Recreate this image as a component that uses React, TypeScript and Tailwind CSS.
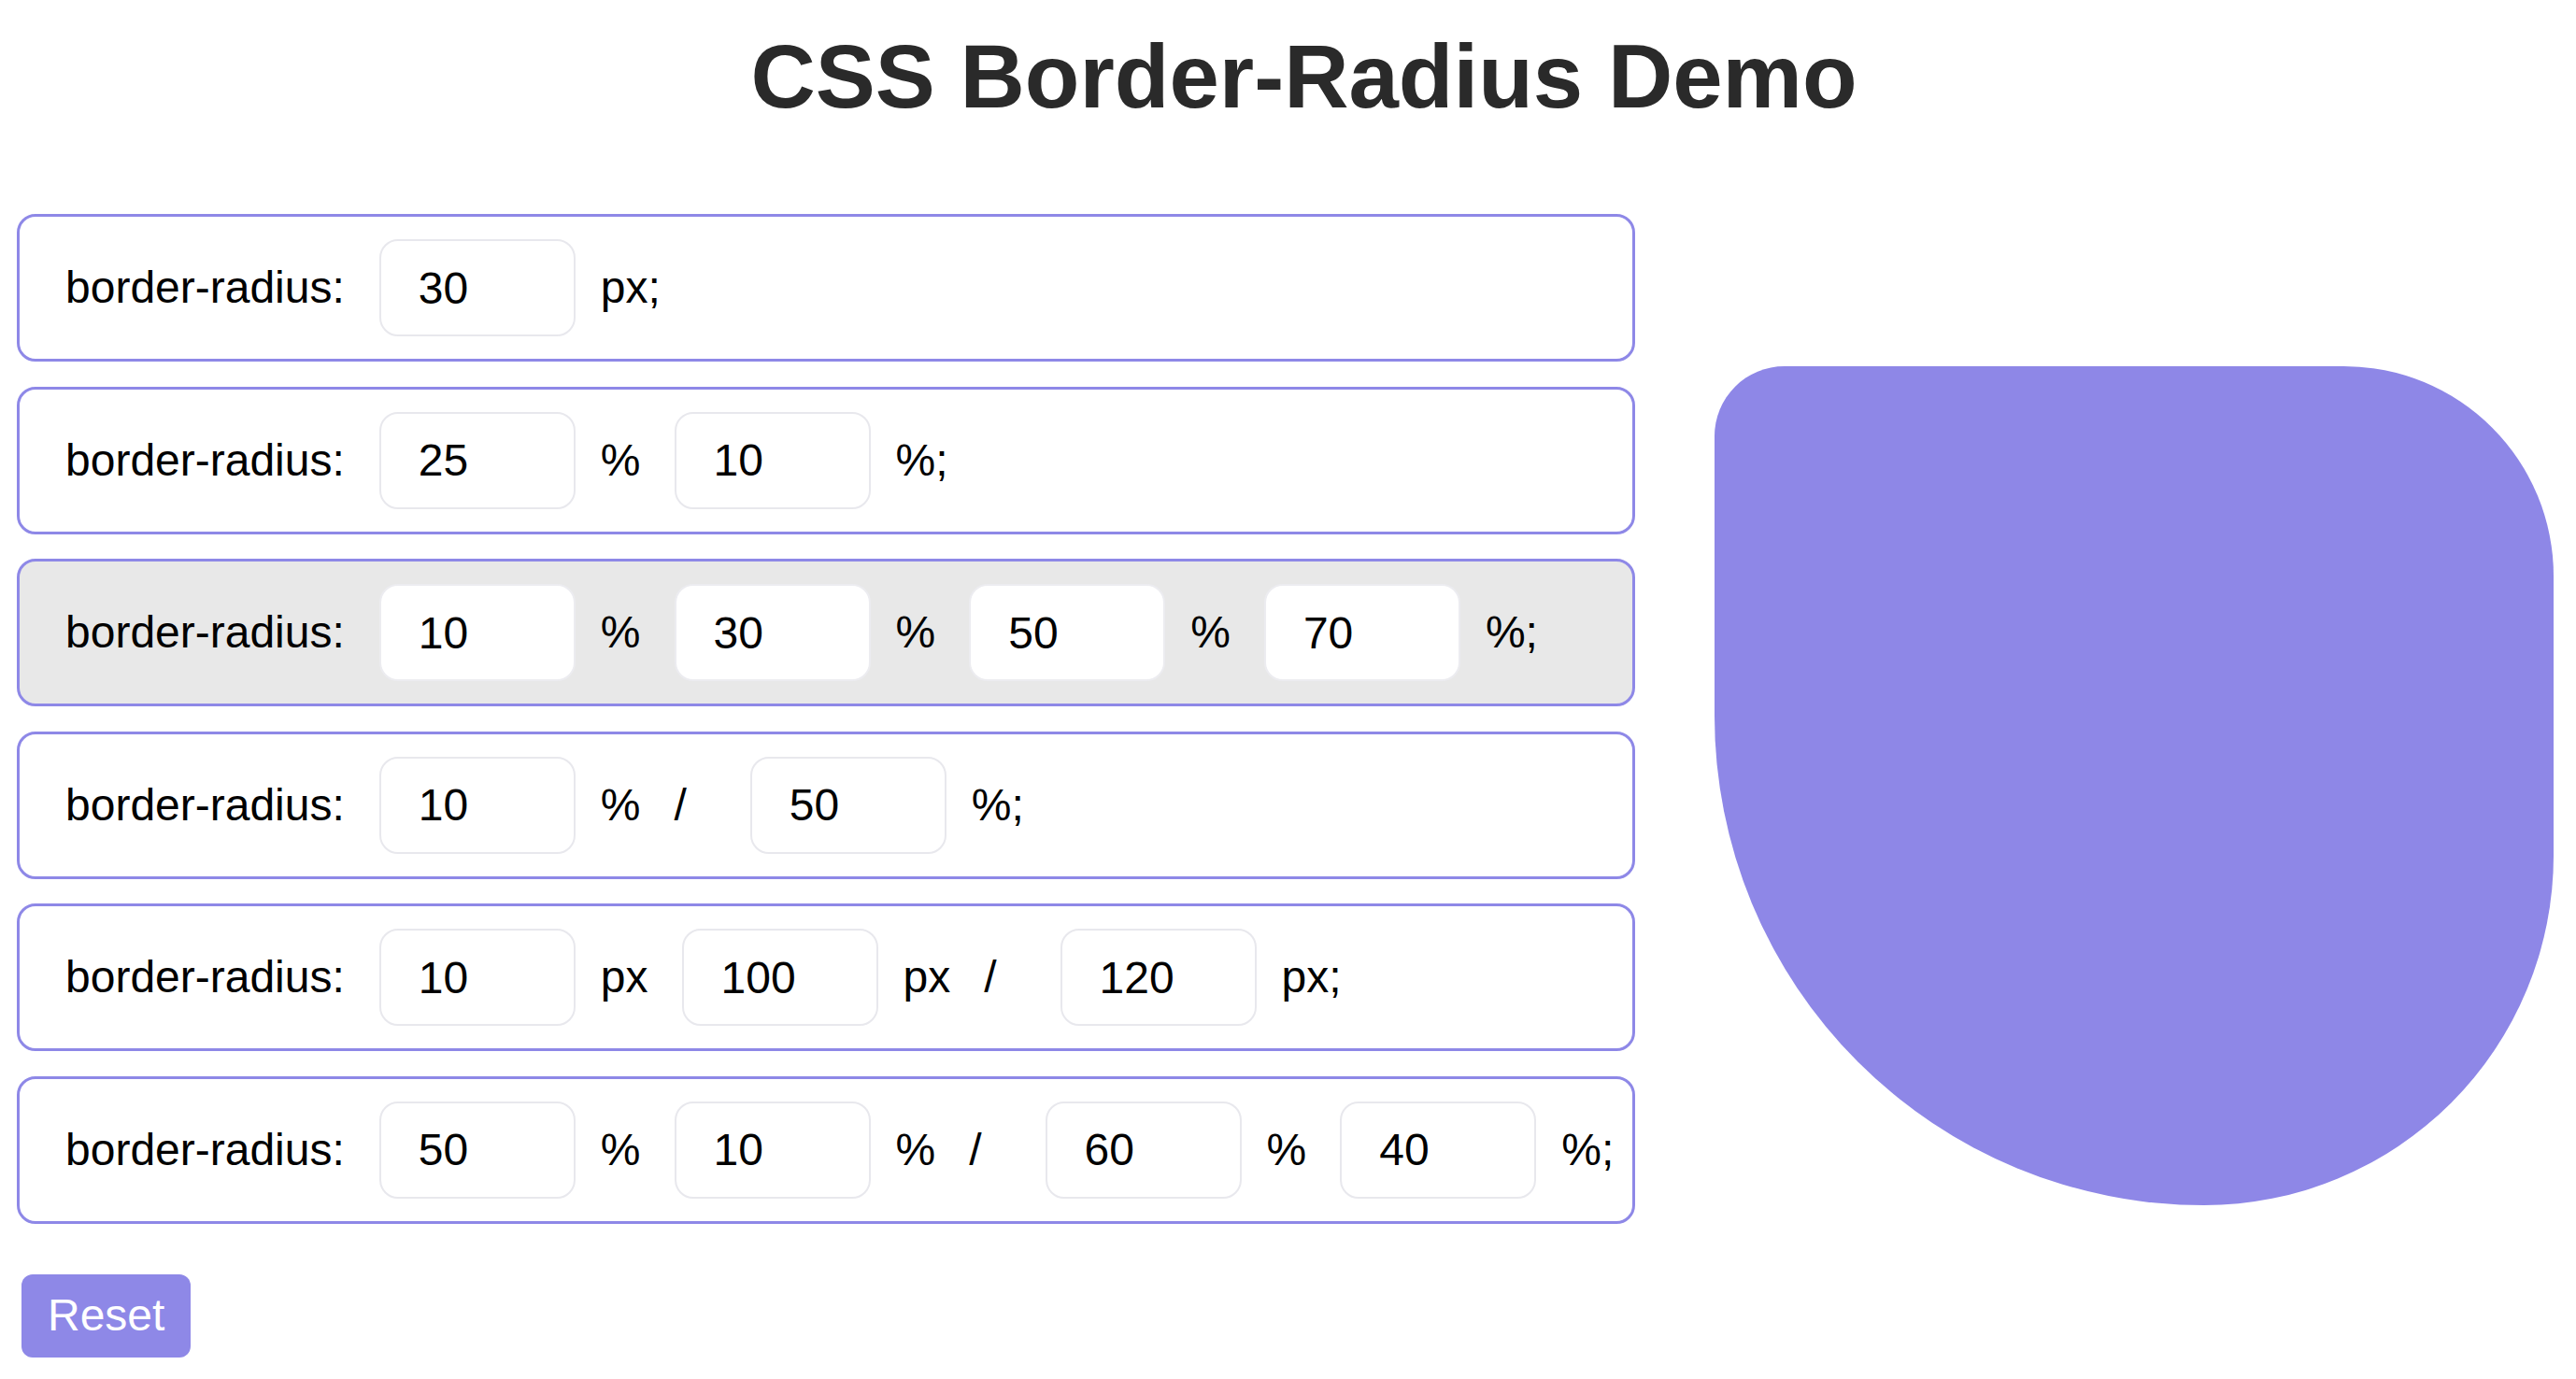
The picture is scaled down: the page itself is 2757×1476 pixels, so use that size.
import { useState } from 'react';

type Part = { kind: 'input'; value: string } | { kind: 'text'; value: string };

// each row of the demo: inputs with their units, slash separates horizontal/vertical radii
const initialRows: Part[][] = [
  [
    { kind: 'input', value: '30' },
    { kind: 'text', value: 'px;' },
  ],
  [
    { kind: 'input', value: '25' },
    { kind: 'text', value: '%' },
    { kind: 'input', value: '10' },
    { kind: 'text', value: '%;' },
  ],
  [
    { kind: 'input', value: '10' },
    { kind: 'text', value: '%' },
    { kind: 'input', value: '30' },
    { kind: 'text', value: '%' },
    { kind: 'input', value: '50' },
    { kind: 'text', value: '%' },
    { kind: 'input', value: '70' },
    { kind: 'text', value: '%;' },
  ],
  [
    { kind: 'input', value: '10' },
    { kind: 'text', value: '%' },
    { kind: 'text', value: '/' },
    { kind: 'input', value: '50' },
    { kind: 'text', value: '%;' },
  ],
  [
    { kind: 'input', value: '10' },
    { kind: 'text', value: 'px' },
    { kind: 'input', value: '100' },
    { kind: 'text', value: 'px' },
    { kind: 'text', value: '/' },
    { kind: 'input', value: '120' },
    { kind: 'text', value: 'px;' },
  ],
  [
    { kind: 'input', value: '50' },
    { kind: 'text', value: '%' },
    { kind: 'input', value: '10' },
    { kind: 'text', value: '%' },
    { kind: 'text', value: '/' },
    { kind: 'input', value: '60' },
    { kind: 'text', value: '%' },
    { kind: 'input', value: '40' },
    { kind: 'text', value: '%;' },
  ],
];

function toRadius(parts: Part[]) {
  let out = '';
  let last = '';
  parts.forEach((p) => {
    if (p.kind === 'input') {
      last = p.value;
    } else if (p.value === '/') {
      out += '/ ';
    } else {
      out += last + p.value.replace(';', '') + ' ';
    }
  });
  return out.trim();
}

export default function App() {
  const [rows, setRows] = useState<Part[][]>(initialRows);
  const [active, setActive] = useState(2);

  const update = (r: number, i: number, value: string) => {
    setRows((prev) =>
      prev.map((row, ri) =>
        ri !== r ? row : row.map((p, pi) => (pi === i ? { ...p, value } : p))
      )
    );
  };

  return (
    <div className="min-h-screen w-full bg-white font-['Liberation_Sans',Arial,sans-serif] text-black">
      <h1 className="pt-[27px] pl-[34px] text-center text-[96px] leading-[110px] font-bold text-[#2a2a2a]">
        CSS Border-Radius Demo
      </h1>

      <div className="mt-[92px] flex items-center pl-[18px]">
        <div className="flex w-[1732px] shrink-0 flex-col">
          <div className="flex flex-col gap-[26.6px]">
            {rows.map((row, r) => (
              <div
                key={r}
                onClick={() => setActive(r)}
                className={
                  'flex h-[158px] cursor-pointer items-center whitespace-nowrap rounded-[20px] border-[3px] border-[#8e88e7] pl-[49px] ' +
                  (active === r ? 'bg-[#e8e8e8]' : 'bg-white')
                }
              >
                <span className="mr-[37px] shrink-0 text-[48px] leading-none">border-radius:</span>
                {row.map((p, i) => {
                  if (p.kind === 'input') {
                    return (
                      <input
                        key={i}
                        value={p.value}
                        onChange={(e) => update(r, i, e.target.value)}
                        className={
                          'h-[104px] w-[210px] shrink-0 rounded-[20px] border-2 px-[40px] text-[48px] text-black outline-none ' +
                          (active === r ? 'border-[#ececf0] bg-white' : 'border-[#e8e8ed] bg-white')
                        }
                      />
                    );
                  }
                  if (p.value === '/') {
                    return (
                      <span key={i} className="mr-[68px] shrink-0 text-[48px] leading-none">
                        /
                      </span>
                    );
                  }
                  return (
                    <span key={i} className="mr-[36px] ml-[27px] shrink-0 text-[48px] leading-none">
                      {p.value}
                    </span>
                  );
                })}
              </div>
            ))}
          </div>

          <div className="mt-[54px] pl-[5px]">
            <button
              onClick={() => {
                setRows(initialRows);
                setActive(2);
              }}
              className="h-[89px] rounded-[12px] bg-[#8e88e7] px-[28px] text-[48px] leading-none text-white"
            >
              Reset
            </button>
          </div>
        </div>

        <div className="ml-[85px] shrink-0">
          <div
            className="h-[898px] w-[898px] bg-[#8e87e7]"
            style={{ borderRadius: toRadius(rows[active]) }}
          />
        </div>
      </div>
    </div>
  );
}
